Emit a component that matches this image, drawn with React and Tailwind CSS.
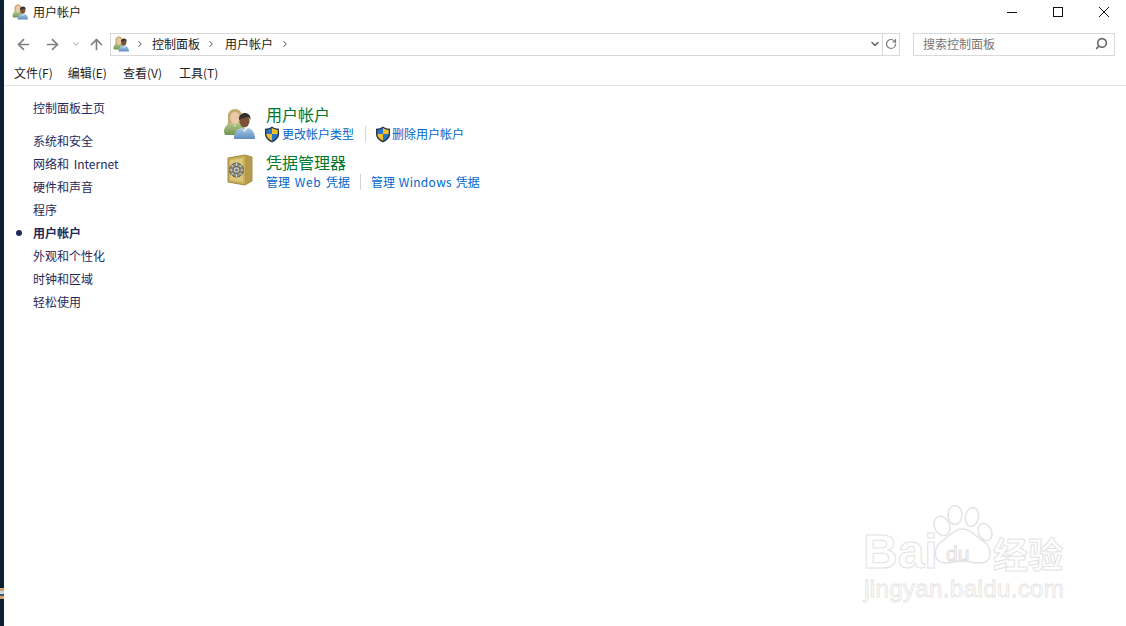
import React from "react";
import { ArrowLeft, ArrowRight, ArrowUp, ChevronDown, ChevronRight, RotateCw, Search } from "lucide-react";

const UsersIcon = ({ size = 16, id = "a" }) => (
  <svg width={size} height={size} viewBox="0 0 32 32" className="shrink-0">
    <defs>
      <linearGradient id={`shirt-${id}`} x1="0" y1="0" x2="0" y2="1">
        <stop offset="0" stopColor="#a9c9e8" />
        <stop offset="1" stopColor="#5f8fbd" />
      </linearGradient>
      <linearGradient id={`green-${id}`} x1="0" y1="0" x2="0" y2="1">
        <stop offset="0" stopColor="#b2c98d" />
        <stop offset="1" stopColor="#6f9450" />
      </linearGradient>
    </defs>
    <path d="M5 11C4 4 8 1 12 1s8 3 7 10c0 3 1 5 1 6H4c1-2 1-4 1-6z" fill="#c6ab72" />
    <ellipse cx="12" cy="10" rx="4.800" ry="6.300" fill="#e8c8a6" />
    <path d="M1 24c0-6 4-8 7-9l4 3 4-3c3 1 6 3 6 9v3H2z" fill={`url(#green-${id})`} />
    <ellipse cx="21.500" cy="13" rx="5" ry="6.300" fill="#7a5238" />
    <path d="M16 12c-.5-5 3-7 6-7s6 2 5.500 7c-1-2-2-3-3-3-3 1-6 1-8.500 3z" fill="#34302c" />
    <path d="M11 31c0-7 3-10 7-11l3.500 2 3.500-2c4 1 7 4 7 11z" fill={`url(#shirt-${id})`} />
    <path d="M18 20l3.500 4 3.500-4-3.500 1.500z" fill="#e3edf6" />
  </svg>
);

const ShieldIcon = () => (
  <svg width="16" height="17" viewBox="0 0 16 17" className="shrink-0">
    <path d="M8 .5c2 1.600 4.400 2.200 7 2.300v5.200c0 3.800-3 6.700-7 8.500-4-1.800-7-4.700-7-8.500V2.800C3.600 2.700 6 2.100 8 .5z" fill="#22384f" />
    <path d="M8 2v6h5.700V3.900C11.500 3.700 9.600 3.100 8 2z" fill="#f5c02c" />
    <path d="M8 2C6.400 3.100 4.500 3.700 2.300 3.900V8H8z" fill="#2a76c6" />
    <path d="M2.300 8c.1 3 2.500 5.200 5.700 6.800V8z" fill="#f5c02c" />
    <path d="M8 8v6.800c3.200-1.600 5.600-3.800 5.700-6.800z" fill="#2a76c6" />
  </svg>
);

const SafeIcon = () => (
  <svg width="30" height="34" viewBox="0 0 30 34" className="shrink-0">
    <path d="M3 4l17-3 7 2v24l-7 4-17-3z" fill="#c9ae58" stroke="#a08a3e" strokeWidth="1" />
    <path d="M20 1l7 2v24l-7 4z" fill="#b39a4c" />
    <path d="M5 6l13-2v24L5 26z" fill="#dcc77a" />
    <circle cx="11.500" cy="16" r="7" fill="#8d8d80" stroke="#5e5e54" strokeWidth="1" />
    <path d="M11.500 9v14M4.500 16h14M6.500 11l10 10M16.500 11l-10 10" stroke="#e4e4da" strokeWidth="1" />
    <circle cx="11.500" cy="16" r="3.500" fill="#cfcfc5" stroke="#6a6a60" strokeWidth="1.500" />
    <circle cx="11.500" cy="16" r="1.500" fill="#77776c" />
  </svg>
);

const Watermark = () => (
  <div className="absolute left-[864px] top-[505px] w-[200px] h-[98px] select-none">
    <svg width="72" height="62" viewBox="0 0 72 62" className="absolute left-[62px] top-0" fill="#fff" stroke="#e3e3e3" strokeWidth="1.500">
      <ellipse cx="16" cy="21" rx="7.500" ry="10" transform="rotate(-25 16 21)" />
      <ellipse cx="29" cy="10" rx="7" ry="9.500" />
      <ellipse cx="46" cy="12" rx="6.500" ry="9.500" transform="rotate(10 46 12)" />
      <ellipse cx="59" cy="27" rx="6.500" ry="9" transform="rotate(-25 59 27)" />
      <path d="M37 24c8 0 12 7 20 12 10 6 10 22-3 22-7 0-12-2-18-2s-10 2-17 2c-12 0-12-15-4-21 8-5 12-13 22-13z" />
    </svg>
    <span className="absolute left-[82px] top-[36px] text-[21px] leading-[26px] text-transparent [-webkit-text-stroke:1px_#e0e0e0] [font-family:'Liberation_Sans',sans-serif]">du</span>
    <span className="absolute left-[-1px] top-[22px] text-[48px] leading-[50px] font-bold text-transparent [-webkit-text-stroke:1px_#e3e3e3] [font-family:'Liberation_Sans',sans-serif]">Bai</span>
    <span className="absolute left-[129px] top-[28px] text-[35px] leading-[40px] font-bold text-transparent [-webkit-text-stroke:1px_#e3e3e3] [font-family:'Noto_Sans_CJK_SC',sans-serif]">经验</span>
    <span className="absolute left-0 top-[71px] text-[24px] leading-[26px] tracking-[0.4px] text-transparent [-webkit-text-stroke:0.8px_#e3e3e3] [font-family:'Liberation_Sans',sans-serif]">jingyan.baidu.com</span>
  </div>
);

const navItems = ["系统和安全", "网络和 Internet", "硬件和声音", "程序", "用户帐户", "外观和个性化", "时钟和区域", "轻松使用"];

export default function App() {
  return (
    <div className="relative h-[626px] w-[1126px] overflow-hidden bg-white flex text-[12px] text-[#1a1a1a] [font-family:'Noto_Sans_CJK_SC','Noto_Sans',sans-serif]">
      <div className="w-[4px] shrink-0 bg-[#0a2036] relative">
        <div className="absolute left-0 top-[588px] w-[4px] flex flex-col">
          <div className="h-[3px] bg-[#d0a070]" />
          <div className="h-[3px] bg-[#c9d6e0]" />
          <div className="h-[2px] bg-[#3a5a78]" />
          <div className="h-[3px] bg-[#d9a060]" />
        </div>
      </div>
      <div className="flex-1 flex flex-col min-w-0">
        <div className="h-[24px] flex items-center">
          <div className="ml-[8px]"><UsersIcon id="t" /></div>
          <span className="ml-[5px] leading-[24px]">用户帐户</span>
          <div className="ml-auto flex items-center">
            <div className="w-[46px] flex justify-center"><div className="h-px w-[10px] bg-[#111]" /></div>
            <div className="w-[46px] flex justify-center"><div className="h-[10px] w-[10px] border border-[#111]" /></div>
            <div className="w-[46px] mr-[-1px] flex justify-center">
              <svg width="10" height="10" viewBox="0 0 10 10" stroke="#111" strokeWidth="1"><path d="M0 0l10 10M10 0L0 10" /></svg>
            </div>
          </div>
        </div>

        <div className="h-[31px] mt-[5px] flex items-start">
          <div className="w-[106px] h-[22px] mt-[4px] flex items-center text-[#7f7f7f]">
            <ArrowLeft size={17} strokeWidth={2.400} className="ml-[11px]" />
            <ArrowRight size={17} strokeWidth={2.400} className="ml-[12px]" />
            <ChevronDown size={10} strokeWidth={2.400} className="ml-[10px] text-[#9a9a9a]" />
            <ArrowUp size={17} strokeWidth={2.400} className="ml-[7px]" />
          </div>
          <div className="h-[23px] mt-[4px] w-[790px] border border-[#d9d9d9] pb-[2px] flex items-center">
            <div className="ml-[2px]"><UsersIcon id="b" /></div>
            <ChevronRight size={10} strokeWidth={2.500} className="ml-[6px] text-[#666]" />
            <span className="ml-[7px]">控制面板</span>
            <ChevronRight size={10} strokeWidth={2.500} className="ml-[6px] text-[#666]" />
            <span className="ml-[9px]">用户帐户</span>
            <ChevronRight size={10} strokeWidth={2.500} className="ml-[7px] text-[#666]" />
            <div className="ml-auto self-stretch -mb-[2px] w-[15px] flex items-center justify-center border-r border-[#d9d9d9] pb-[2px]">
              <ChevronDown size={12} strokeWidth={3} className="text-[#666]" />
            </div>
            <div className="w-[16px] flex justify-center"><RotateCw size={12} strokeWidth={2.400} className="text-[#777]" /></div>
          </div>
          <div className="h-[23px] mt-[4px] ml-[13px] w-[202px] border border-[#d9d9d9] pb-[2px] flex items-center text-[#767676]">
            <span className="ml-[9px]">搜索控制面板</span>
            <Search size={13} strokeWidth={3} className="ml-auto mr-[6px] -scale-x-100 text-[#666]" />
          </div>
        </div>

        <div className="h-[26px] flex items-center border-b border-[#e3e3e3] pl-[10px] text-[#222]">
          <span>文件(F)</span>
          <span className="ml-[15px]">编辑(E)</span>
          <span className="ml-[16px]">查看(V)</span>
          <span className="ml-[17px]">工具(T)</span>
        </div>

        <div className="flex-1 flex">
          <div className="w-[219px] shrink-0 pl-[29px] pt-[10px] text-[#1e2a5a]">
            <div className="h-[23px] leading-[23px]">控制面板主页</div>
            <div className="mt-[10px]">
              {navItems.map((n) => (
                <div key={n} className={`relative h-[23px] leading-[23px] [word-spacing:2px] ${n === "用户帐户" ? "font-bold" : ""}`}>
                  {n === "用户帐户" && <span className="absolute left-[-17px] top-[9px] h-[6px] w-[6px] rounded-full bg-[#1e2a5a]" />}
                  {n}
                </div>
              ))}
            </div>
          </div>

          <div className="pt-[18px] flex flex-col">
            <div className="flex h-[48px]">
              <div className="w-[43px] pt-[4px] shrink-0"><UsersIcon size={32} id="c" /></div>
              <div>
                <div className="text-[16px] leading-[21px] text-[#00782a]">用户帐户</div>
                <div className="flex items-center h-[18px] text-[#0066cc]">
                  <div className="ml-[-2px]"><ShieldIcon /></div>
                  <span className="ml-[2px]">更改帐户类型</span>
                  <div className="ml-[11px] mr-[9px] h-[16px] w-px bg-[#d4d4d4]" />
                  <ShieldIcon />
                  <span className="ml-[1px]">删除用户帐户</span>
                </div>
              </div>
            </div>
            <div className="flex">
              <div className="w-[43px] pt-[2px] pl-[2px] shrink-0"><SafeIcon /></div>
              <div>
                <div className="text-[16px] leading-[21px] text-[#00782a]">凭据管理器</div>
                <div className="flex items-center h-[18px] text-[#0066cc]">
                  <span className="whitespace-pre [word-spacing:2px]">管理 <span className="tracking-[0.7px]">Web</span> 凭据</span>
                  <div className="mx-[10px] h-[16px] w-px bg-[#d4d4d4]" />
                  <span className="whitespace-pre [word-spacing:1px]">管理 <span className="tracking-[0.3px]">Windows</span> 凭据</span>
                </div>
              </div>
            </div>
          </div>
        </div>
      </div>
      <Watermark />
    </div>
  );
}
